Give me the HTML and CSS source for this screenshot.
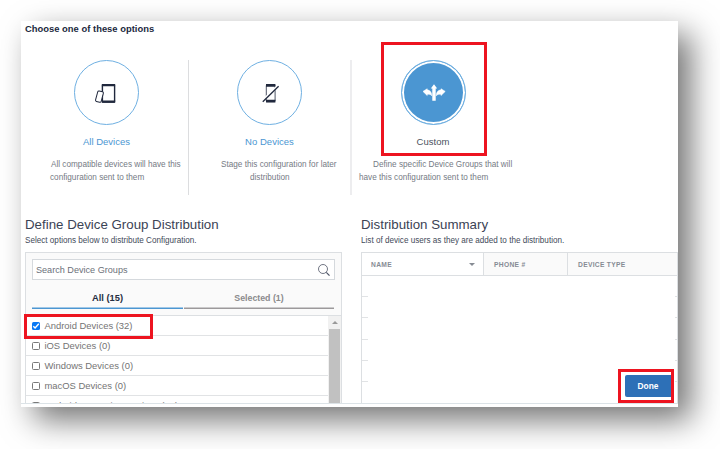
FILE: index.html
```html
<!DOCTYPE html>
<html lang="en">
<head>
<meta charset="utf-8">
<title>Device Group Distribution</title>
<link rel="stylesheet" href="styles.css">
</head>
<body>
<main class="panel">
  <h1 class="title">Choose one of these options</h1>
  <section class="options">
    <article class="option">
      <div class="circle">
        <svg viewBox="0 0 65 65" width="65" height="65" fill="none" stroke="#20283d">
          <rect x="28.4" y="25" width="12.2" height="17" rx=".8" stroke-width="1.4"/>
          <path d="M27.8 25.2h13.4M27.8 41.7h13.4" stroke-width="2.3"/>
          <rect x="22.6" y="31.2" width="5.8" height="10.8" rx="1.2" transform="rotate(15 25.4 36.4)" fill="#fff" stroke-width="1"/>
        </svg>
      </div>
      <h2 class="label">All Devices</h2>
      <p class="desc all"><span class="l1">All compatible devices will have this</span><span class="l2">configuration sent to them</span></p>
    </article>
    <article class="option">
      <div class="circle">
        <svg viewBox="0 0 65 65" width="65" height="65" fill="none" stroke="#20283d">
          <rect x="29.3" y="25" width="8.8" height="16.6" rx=".8" stroke-width=".8"/>
          <path d="M29 25.4h9.4M29 41.2h9.4" stroke-width="2.8"/>
          <path d="M25 41.5 41 26" stroke="#fff" stroke-width="2.6"/>
          <path d="M25.8 41.8 41.6 26.2" stroke-width="1.3"/>
        </svg>
      </div>
      <h2 class="label">No Devices</h2>
      <p class="desc none"><span class="l1">Stage this configuration for later</span><span class="l2">distribution</span></p>
    </article>
    <article class="option">
      <div class="circle on">
        <svg viewBox="0 0 65 65" width="65" height="65" fill="#fff">
          <path d="M33 24.2 36.2 28.4h-1.5v12.4h-3.4V28.4h-1.5z"/>
          <path d="M22 31.4 26.2 28.8v1.3c2.4 0 4.2 1.5 4.6 5.6-1.4-1.5-2.7-1.6-4.6-1.5v1.3zM44.2 31.4 40 28.8v1.3c-2.6 0-4.4 1.5-4.8 5.6 1.4-1.5 2.9-1.6 4.8-1.5v1.3z" stroke="#fff" stroke-width=".6"/>
        </svg>
      </div>
      <h2 class="label dark">Custom</h2>
      <p class="desc custom"><span class="l1">Define specific Device Groups that will</span><span class="l2">have this configuration sent to them</span></p>
      <i class="mark mark-custom"></i>
    </article>
  </section>
  <div class="columns">
    <section class="groups">
      <h2 class="heading">Define Device Group Distribution</h2>
      <p class="sub">Select options below to distribute Configuration.</p>
      <div class="box">
        <div class="tools">
          <div class="search"><span>Search Device Groups</span>
            <svg viewBox="0 0 12 12" width="12" height="12" fill="none" stroke="#4c5365"><circle cx="5" cy="5" r="4.5" stroke-width=".8"/><path d="m8.3 8.3 3.2 3.3" stroke-width="1.2"/></svg>
          </div>
          <div class="tabs"><b class="tab active">All (15)</b><b class="tab">Selected (1)</b></div>
        </div>
        <div class="list">
          <div class="rows">
            <div class="row"><span class="check checked"><svg viewBox="0 0 8 8" width="8" height="8" fill="none" stroke="#fff" stroke-width="1.4"><path d="m1.3 4.2 1.8 1.8 3.7-4.2"/></svg></span><span>Android Devices (32)</span><i class="mark mark-row"></i></div>
            <div class="row"><span class="check"></span><span>iOS Devices (0)</span></div>
            <div class="row"><span class="check"></span><span>Windows Devices (0)</span></div>
            <div class="row"><span class="check"></span><span>macOS Devices (0)</span></div>
            <div class="row"><span class="check"></span><span>Android Enterprise Devices (15)</span></div>
          </div>
          <div class="scroll"><i class="up"></i><i class="thumb"></i></div>
        </div>
      </div>
    </section>
    <section class="summary">
      <h2 class="heading">Distribution Summary</h2>
      <p class="sub">List of device users as they are added to the distribution.</p>
      <div class="table">
        <div class="head"><b class="th name">NAME<i class="sort"></i></b><b class="th">PHONE #</b><b class="th">DEVICE TYPE</b></div>
        <div class="line"></div><div class="line"></div><div class="line"></div><div class="line"></div><div class="line"></div>
      </div>
    </section>
  </div>
  <div class="done-wrap"><div class="done">Done</div></div>
</main>
</body>
</html>
```
FILE: styles.css
```css
* { box-sizing: border-box; }
body { margin: 0; width: 720px; height: 449px; padding: 21px; overflow: hidden; background: #fff; font-family: "Liberation Sans", Arial, sans-serif; color: #20283d; }
h1, h2, p { margin: 0; font-weight: normal; white-space: nowrap; }
svg { display: block; }
.panel { position: relative; width: 657px; height: 386px; padding: 0 0 0 4px; background: #fff; box-shadow: 13px 13px 30px rgba(0,0,0,.55); }
.title { height: 39px; padding-top: 1px; font-size: 9.4px; line-height: 14px; font-weight: bold; letter-spacing: .02px; }
.options { display: grid; grid-template-columns: 163px 162px 164px; height: 135px; }
.option { position: relative; display: flex; flex-direction: column; align-items: center; }
.option + .option { border-left: 1px solid #dcdddf; }
.option:nth-child(3) { border-left: 2px solid #ededef; }
.circle { width: 65px; height: 65px; flex: none; border: 1px solid #6fb0e2; border-radius: 50%; }
.circle svg { margin: -1px; }
.circle.on { background: #4b96d2; box-shadow: inset 0 0 0 2px #fff; }
.label { margin-top: 9px; font-size: 9.5px; line-height: 15px; color: #4b96d2; letter-spacing: .02px; }
.label.dark { color: #4a5160; }
.desc { align-self: stretch; margin-top: 9px; font-size: 8.2px; line-height: 13px; color: #757a84; }
.desc span { display: block; }
.all .l1 { margin-left: 26px; } .all .l2 { margin-left: 25px; }
.none .l1 { margin-left: 32px; } .none .l2 { margin-left: 61px; }
.custom .l1 { margin-left: 21px; } .custom .l2 { margin-left: 7px; }
.mark { position: absolute; border: 3px solid #ed1420; }
.mark-custom { left: 29px; top: -18px; width: 106px; height: 114px; }
.columns { display: grid; grid-template-columns: 317px 317px; gap: 19px; height: 209px; margin-left: -4px; padding: 20px 0 0 4px; overflow: hidden; border-bottom: 1px solid #dce3e7; }
.heading { font-size: 13.3px; line-height: 19px; color: #3b4355; }
.sub { height: 18px; font-size: 8.15px; line-height: 13px; color: #434a5a; }
.box { height: 160px; border: 1px solid #dcdfe2; }
.tools { height: 63px; padding: 6px; background: #fafafa; border-bottom: 1px solid #dcdfe2; }
.search { display: flex; justify-content: space-between; align-items: center; width: 303px; height: 21px; padding: 0 4px 0 3px; border: 1px solid #d5d9dd; background: #fff; font-size: 9.1px; color: #6b7079; }
.tabs { display: grid; grid-template-columns: 151px 150px; gap: 1px; margin-top: 9px; }
.tab { height: 20px; text-align: center; font-size: 8.8px; line-height: 18px; color: #8b8b8d; box-shadow: inset 0 -1.5px #9c999b; }
.tab.active { color: #252e42; font-size: 9.3px; box-shadow: inset 0 -1.5px #4b96d2; }
.list { display: flex; height: 96px; }
.rows { width: 302px; }
.row { position: relative; display: flex; align-items: center; gap: 4.4px; height: 20px; padding-left: 6px; border-bottom: 1px solid #e1e3e5; font-size: 9.45px; color: #747474; white-space: nowrap; }
.check { width: 8px; height: 8px; border: 1px solid #797979; border-radius: 1.5px; }
.check.checked { border: 0; background: #0878f4; }
.mark-row { left: -2px; top: -2px; width: 129px; height: 25px; z-index: 2; }
.scroll { width: 13px; background: #f1f1f1; padding: 5px 1px 0; display: flex; flex-direction: column; align-items: center; }
.up { border: 3px solid transparent; border-top: 0; border-bottom: 3px solid #999; }
.thumb { width: 11px; height: 90px; margin-top: 5px; background: #c1c1c1; }
.table { height: 160px; border: 1px solid #dcdfe2; }
.head { display: grid; grid-template-columns: 121px 84px 110px; height: 23px; border-bottom: 1px solid #dcdfe2; background: #fafafa; }
.th { display: flex; align-items: center; justify-content: space-between; padding: 0 8px 0 10px; border-left: 1px solid #dcdfe2; font-size: 6.7px; letter-spacing: .3px; color: #868b94; white-space: nowrap; }
.th.name { border-left: 0; padding-left: 9px; background: #fff; }
.sort { border: 3px solid transparent; border-bottom: 0; border-top: 3px solid #868b93; }
.line { display: flex; justify-content: space-between; height: 21.2px; }
.line::before, .line::after { content: ""; align-self: flex-end; width: 6px; height: 1px; background: #e1e3e5; }
.line::after { width: 2px; }
.done-wrap { position: absolute; left: 597px; top: 348px; width: 56px; height: 34px; padding: 3px 0 3px 4px; border: 3px solid #ed1420; background: #fff; }
.done { height: 22px; border-radius: 2px 0 0 2px; background: #2d70b7; color: #fff; font-size: 8.4px; font-weight: bold; line-height: 22px; text-align: center; }
```
